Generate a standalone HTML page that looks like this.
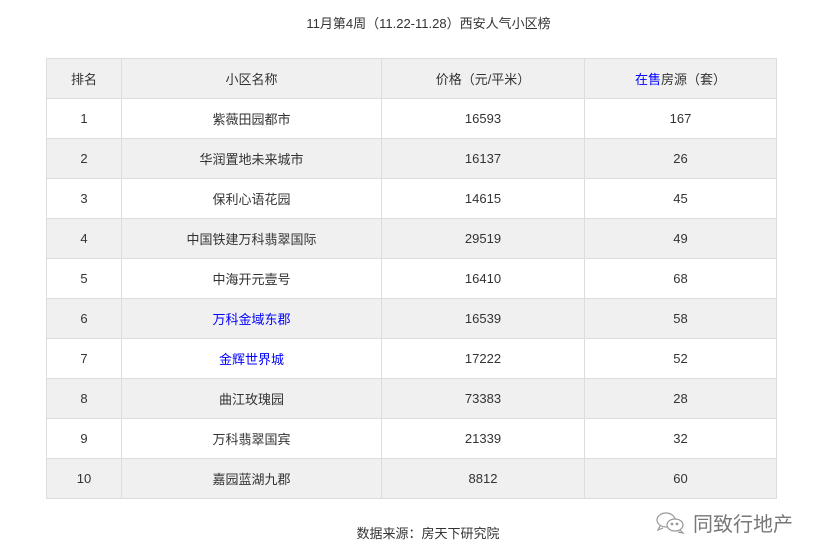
<!DOCTYPE html>
<html><head><meta charset="utf-8"><style>
body{margin:0;width:821px;height:556px;background:#fff;font-family:"Liberation Sans","Noto Sans CJK SC",sans-serif;color:#333;position:relative;overflow:hidden}
.t{position:absolute;top:14px;left:18px;width:821px;text-align:center;font-size:13px;line-height:20px}
table{position:absolute;left:46px;top:58px;border-collapse:collapse;font-size:13px}
td{border:1px solid #ddd;height:39px;text-align:center;padding:0}
tr.g td{background:#f0f0f0}
.b{color:#00f}
.src{position:absolute;top:523px;left:0;width:856px;text-align:center;font-size:13px}
.wm{position:absolute;left:655px;top:508px;font-size:20px;color:#777;display:flex;align-items:center}
</style></head><body>
<div class="t">11月第4周（11.22-11.28）西安人气小区榜</div>
<table>
<colgroup><col style="width:75px"><col style="width:260px"><col style="width:203px"><col style="width:192px"></colgroup>
<tr class="g"><td>排名</td><td>小区名称</td><td>价格（元/平米）</td><td><span class="b">在售</span>房源（套）</td></tr>
<tr><td>1</td><td>紫薇田园都市</td><td>16593</td><td>167</td></tr>
<tr class="g"><td>2</td><td>华润置地未来城市</td><td>16137</td><td>26</td></tr>
<tr><td>3</td><td>保利心语花园</td><td>14615</td><td>45</td></tr>
<tr class="g"><td>4</td><td>中国铁建万科翡翠国际</td><td>29519</td><td>49</td></tr>
<tr><td>5</td><td>中海开元壹号</td><td>16410</td><td>68</td></tr>
<tr class="g"><td>6</td><td class="b">万科金域东郡</td><td>16539</td><td>58</td></tr>
<tr><td>7</td><td class="b">金辉世界城</td><td>17222</td><td>52</td></tr>
<tr class="g"><td>8</td><td>曲江玫瑰园</td><td>73383</td><td>28</td></tr>
<tr><td>9</td><td>万科翡翠国宾</td><td>21339</td><td>32</td></tr>
<tr class="g"><td>10</td><td>嘉园蓝湖九郡</td><td>8812</td><td>60</td></tr>
</table>
<div class="src">数据来源：房天下研究院</div>
<div class="wm"><svg width="32" height="24" viewBox="0 0 32 24" fill="none" stroke="#999" stroke-width="1.2"><ellipse cx="11" cy="9" rx="9" ry="7"/><path d="M5 15l-2 4 5-2"/><ellipse cx="20" cy="14" rx="8" ry="6" fill="#fff"/><path d="M25 19l3 3-5-1"/><circle cx="17" cy="13" r=".8" fill="#999"/><circle cx="22" cy="13" r=".8" fill="#999"/></svg><span style="margin-left:6px">同致行地产</span></div>
</body></html>
